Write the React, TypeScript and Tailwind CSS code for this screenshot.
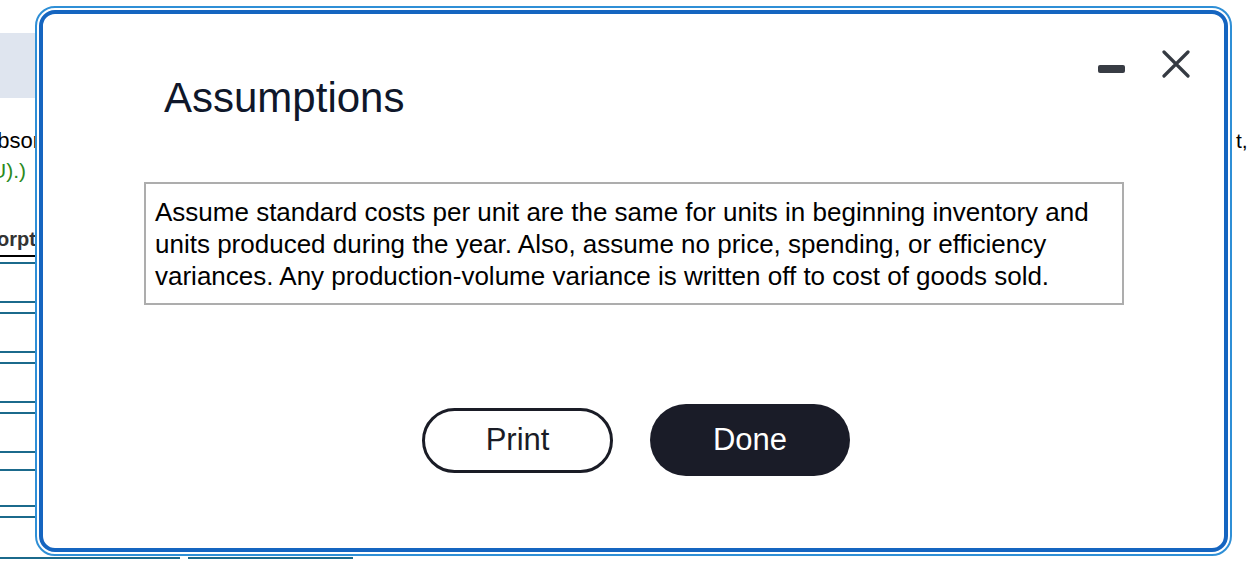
import React from "react";

const F = { fontFamily: '"Liberation Sans", Arial, Helvetica, sans-serif' };

function Background() {
  return (
    <div className="flex w-[1253px] h-[569px] bg-white" style={F}>
      <div className="w-[60px] overflow-hidden flex flex-col">
        <div className="h-[33px]" />
        <div className="h-[65px] bg-[#dfe5ef]" />
        <div className="mt-[28px] text-[22px] leading-[30px] text-black whitespace-nowrap -ml-[15px]">absorp</div>
        <div className="text-[21px] leading-[30px] text-[#2b8a1e] whitespace-nowrap -ml-[9px]">U).)</div>
        <div className="mt-[38px] text-[20px] leading-[30px] font-bold text-[#333] whitespace-nowrap -ml-[3px] border-b-2 border-black pb-[1px]">orpt</div>
        <div className="mt-[5px] border-t-2 border-[#1b6a8c]" />
        <div className="mt-[37px] border-t-2 border-[#1b6a8c]" />
        <div className="mt-[9px] border-t-2 border-[#1b6a8c]" />
        <div className="mt-[37px] border-t-2 border-[#1b6a8c]" />
        <div className="mt-[9px] border-t-2 border-[#1b6a8c]" />
        <div className="mt-[37px] border-t-2 border-[#1b6a8c]" />
        <div className="mt-[9px] border-t-2 border-[#1b6a8c]" />
        <div className="mt-[37px] border-t-2 border-[#1b6a8c]" />
        <div className="mt-[16px] border-t-2 border-[#1b6a8c]" />
        <div className="mt-[34px] border-t-2 border-[#1b6a8c]" />
        <div className="mt-[9px] border-t-2 border-[#1b6a8c]" />
        <div className="mt-[39px] border-t-2 border-[#1b6a8c]" />
      </div>
      <div className="flex-1 flex flex-col">
        <div className="flex-1 flex justify-end">
          <div className="mt-[126px] text-[21px] leading-[30px] text-black whitespace-nowrap w-[17px] overflow-visible">t,</div>
        </div>
        <div className="h-[12px] flex">
          <div className="w-[120px] h-[2px] bg-[#1b6a8c]" />
          <div className="w-[8px]" />
          <div className="w-[165px] h-[2px] bg-[#1b6a8c]" />
        </div>
      </div>
    </div>
  );
}

function Modal() {
  return (
    <div className="absolute left-[35px] top-[6px] w-[1197px] h-[550px] rounded-[20px] border-2 border-[#2f8fd6] bg-white p-[2px]" style={F}>
      <div className="h-full rounded-[16px] border-4 border-[#1565c0] flex flex-col">
        <div className="flex justify-between items-start">
          <div className="ml-[121px] mt-[60px] text-[42px] leading-[48px] text-[#0f172a] whitespace-nowrap">
            Assumptions
          </div>
          <div className="mt-[36px] mr-[34px] flex items-start">
            <div className="mt-[15px] w-[27px] h-[8px] rounded-[2px] bg-[#383c44]" />
            <div className="ml-[37px] w-[28px] h-[28px]">
              <svg width="28" height="28" viewBox="0 0 28 28" fill="none">
                <path d="M2 2L26 26M26 2L2 26" stroke="#353a42" strokeWidth="3.2" strokeLinecap="round" />
              </svg>
            </div>
          </div>
        </div>
        <div className="ml-[101px] mt-[60px] w-[980px] border-2 border-[#adadad] pt-[12px] pb-[11px] pl-[9px] pr-[8px] text-[26px] leading-[32px] text-black">
          <div className="whitespace-nowrap">Assume standard costs per unit are the same for units in beginning inventory and</div>
          <div className="whitespace-nowrap">units produced during the year. Also, assume no price, spending, or efficiency</div>
          <div className="whitespace-nowrap">variances. Any production-volume variance is written off to cost of goods sold.</div>
        </div>
        <div className="mt-[99px] flex justify-center items-center gap-[37px] ml-[5px]">
          <button className="w-[191px] h-[65px] rounded-full border-[3px] border-[#1a1c26] bg-white text-[31px] text-[#1a1c26] flex items-center justify-center">
            Print
          </button>
          <button className="w-[200px] h-[72px] rounded-full bg-[#1a1c28] text-[31px] text-white flex items-center justify-center">
            Done
          </button>
        </div>
      </div>
    </div>
  );
}

export default function App() {
  return (
    <div className="relative w-[1253px] h-[569px] overflow-hidden bg-white">
      <Background />
      <Modal />
    </div>
  );
}
